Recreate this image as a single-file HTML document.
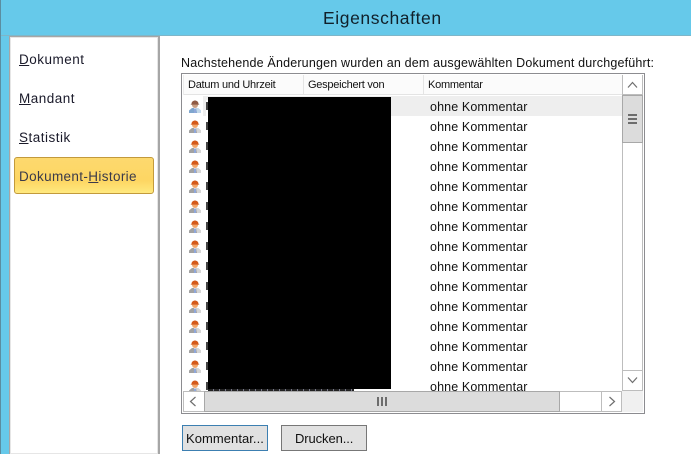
<!DOCTYPE html>
<html><head><meta charset="utf-8">
<style>
html,body{margin:0;padding:0}
body{width:691px;height:454px;position:relative;overflow:hidden;background:#fff;font-family:"Liberation Sans",sans-serif;color:#111}
div{position:absolute;box-sizing:border-box}
.t{white-space:nowrap;line-height:16px;height:16px}
.nav{font-size:13.5px;left:19px;letter-spacing:.5px;color:#1a1a2a}
.r{left:430px;font-size:12.5px;letter-spacing:.12px;color:#111}
.h{font-size:11px;top:77px;color:#111;letter-spacing:-.25px}
.ic{position:absolute;left:188px;width:14px;height:14px}
u{text-decoration:underline}
</style></head><body>
<svg width="0" height="0" style="position:absolute"><defs>
<g id="p"><path d="M1 14V11.5L4 9H10L13 11.5V14Z" fill="#a2a2a2"/><path d="M8 9H10L13 11.5V14H9Z" fill="#d6d6d6"/><path d="M6 9H8V14H6Z" fill="#fff"/><path d="M6.5 9.5H7.5V14H6.5Z" fill="#1f4fb5"/><circle cx="7" cy="6" r="3" fill="#f2a86c"/><path d="M3.5 4.7C4 0.5 10 0.5 10.5 4.7L11.5 5.6H2.5Z" fill="#d4591a"/></g>
<g id="p0"><path d="M1 14V11.5L4 9H10L13 11.5V14Z" fill="#7fa6ce"/><path d="M8 9H10L13 11.5V14H9Z" fill="#c3d8ea"/><path d="M6 9H8V14H6Z" fill="#fff"/><path d="M6.5 9.5H7.5V14H6.5Z" fill="#1f4fb5"/><circle cx="7" cy="6" r="3" fill="#c99f84"/><path d="M3.5 4.7C4 0.5 10 0.5 10.5 4.7L11.5 5.6H2.5Z" fill="#8f5a44"/></g>
</defs></svg>

<div style="left:0;top:0;width:691px;height:36px;background:#66c9ea;border-bottom:1px solid #7fb6c8"></div>
<div style="left:0;top:36px;width:9px;height:418px;background:#66c9ea"></div>
<div style="left:0;top:0;width:1px;height:454px;background:#5b8da0"></div>
<div class="t" style="left:323px;top:8px;height:20px;line-height:20px;font-size:17.5px;letter-spacing:.6px;color:#10202a">Eigenschaften</div>

<div style="left:9px;top:36px;width:150px;height:418px;background:#fff;border:1px solid #a6a6a6;border-bottom:0;box-shadow:inset 0 0 0 1px #e6e6e6"></div>
<div style="left:159px;top:36px;width:1px;height:418px;background:#a6a6a6"></div>

<div class="t nav" style="top:52px"><u>D</u>okument</div>
<div class="t nav" style="top:91px"><u>M</u>andant</div>
<div class="t nav" style="top:130px"><u>S</u>tatistik</div>
<div style="left:14px;top:157px;width:140px;height:37px;border:1px solid #c29a3c;border-radius:3px;background:linear-gradient(#fdd96e,#fdd663 65%,#ffe97f)"></div>
<div class="t nav" style="top:169px;letter-spacing:.36px;color:#3a3a4a">Dokument-<u>H</u>istorie</div>

<div class="t" style="left:181px;top:55px;font-size:12.5px;letter-spacing:.18px;color:#111">Nachstehende Änderungen wurden an dem ausgewählten Dokument durchgeführt:</div>

<div style="left:181px;top:73px;width:464px;height:341px;border:1px solid #8c8c90;background:#fff"></div>
<div style="left:183px;top:75px;width:439px;height:20px;background:#fbfbfb;border-bottom:1px solid #e4e4e4"></div>
<div style="left:303px;top:75px;width:1px;height:20px;background:#e4e4e4"></div>
<div style="left:423px;top:75px;width:1px;height:20px;background:#e4e4e4"></div>
<div style="left:183px;top:75px;width:1px;height:20px;background:#ececec"></div>
<div class="t h" style="left:188px">Datum und Uhrzeit</div>
<div class="t h" style="left:308px">Gespeichert von</div>
<div class="t h" style="left:428px">Kommentar</div>

<div style="left:203px;top:96px;width:419px;height:20px;background:#eeeeee"></div>

<svg class="ic" style="top:99px"><use href="#p0"/></svg>
<svg class="ic" style="top:119px"><use href="#p"/></svg>
<svg class="ic" style="top:139px"><use href="#p"/></svg>
<svg class="ic" style="top:159px"><use href="#p"/></svg>
<svg class="ic" style="top:179px"><use href="#p"/></svg>
<svg class="ic" style="top:199px"><use href="#p"/></svg>
<svg class="ic" style="top:219px"><use href="#p"/></svg>
<svg class="ic" style="top:239px"><use href="#p"/></svg>
<svg class="ic" style="top:259px"><use href="#p"/></svg>
<svg class="ic" style="top:279px"><use href="#p"/></svg>
<svg class="ic" style="top:299px"><use href="#p"/></svg>
<svg class="ic" style="top:319px"><use href="#p"/></svg>
<svg class="ic" style="top:339px"><use href="#p"/></svg>
<svg class="ic" style="top:359px"><use href="#p"/></svg>
<svg class="ic" style="top:379px;height:12px"><use href="#p"/></svg>

<div class="t r" style="top:99px">ohne Kommentar</div>
<div class="t r" style="top:119px">ohne Kommentar</div>
<div class="t r" style="top:139px">ohne Kommentar</div>
<div class="t r" style="top:159px">ohne Kommentar</div>
<div class="t r" style="top:179px">ohne Kommentar</div>
<div class="t r" style="top:199px">ohne Kommentar</div>
<div class="t r" style="top:219px">ohne Kommentar</div>
<div class="t r" style="top:239px">ohne Kommentar</div>
<div class="t r" style="top:259px">ohne Kommentar</div>
<div class="t r" style="top:279px">ohne Kommentar</div>
<div class="t r" style="top:299px">ohne Kommentar</div>
<div class="t r" style="top:319px">ohne Kommentar</div>
<div class="t r" style="top:339px">ohne Kommentar</div>
<div class="t r" style="top:359px">ohne Kommentar</div>
<div class="t r" style="top:379px;height:12px;overflow:hidden">ohne Kommentar</div>

<div style="left:206px;top:100px;width:2px;height:290px;background:repeating-linear-gradient(#fff 0,#fff 2px,#444 2px,#444 10px,#fff 10px,#fff 20px)"></div>
<div style="left:208px;top:97px;width:183px;height:292px;background:#000"></div>
<div style="left:208px;top:389px;width:146px;height:2px;background:repeating-linear-gradient(90deg,#222 0,#222 5px,#778 5px,#778 6px)"></div>

<!-- vertical scrollbar -->
<div style="left:622px;top:75px;width:21px;height:316px;background:#fff;border:1px solid #bdbdbd;border-width:0 1px 0 1px"></div>
<div style="left:622px;top:94px;width:21px;height:1px;background:#bdbdbd"></div>
<div style="left:622px;top:95px;width:21px;height:48px;background:#dcdcdc;border:1px solid #a8a8a8"></div>
<div style="left:628px;top:114px;width:9px;height:2px;background:#6d6d6d"></div>
<div style="left:628px;top:118px;width:9px;height:2px;background:#6d6d6d"></div>
<div style="left:628px;top:122px;width:9px;height:2px;background:#6d6d6d"></div>
<div style="left:622px;top:370px;width:21px;height:1px;background:#bdbdbd"></div>
<div style="left:622px;top:390px;width:21px;height:1px;background:#bdbdbd"></div>
<svg style="position:absolute;left:627px;top:81px" width="11" height="8"><path d="M1 6.5L5.5 1.5L10 6.5" fill="none" stroke="#6f6f6f" stroke-width="1.2"/></svg>
<svg style="position:absolute;left:627px;top:376px" width="11" height="8"><path d="M1 1.5L5.5 6.5L10 1.5" fill="none" stroke="#6f6f6f" stroke-width="1.2"/></svg>

<!-- horizontal scrollbar -->
<div style="left:183px;top:391px;width:439px;height:21px;background:#fff;border:1px solid #bdbdbd"></div>
<div style="left:204px;top:391px;width:356px;height:21px;background:#dcdcdc;border:1px solid #a8a8a8"></div>
<div style="left:601px;top:391px;width:1px;height:21px;background:#bdbdbd"></div>
<div style="left:622px;top:391px;width:21px;height:21px;background:#f0f0f0"></div>
<div style="left:377px;top:397px;width:2px;height:9px;background:#6d6d6d"></div>
<div style="left:381px;top:397px;width:2px;height:9px;background:#6d6d6d"></div>
<div style="left:385px;top:397px;width:2px;height:9px;background:#6d6d6d"></div>
<svg style="position:absolute;left:189px;top:396px" width="8" height="11"><path d="M6.5 1L1.5 5.5L6.5 10" fill="none" stroke="#6f6f6f" stroke-width="1.2"/></svg>
<svg style="position:absolute;left:608px;top:396px" width="8" height="11"><path d="M1.5 1L6.5 5.5L1.5 10" fill="none" stroke="#6f6f6f" stroke-width="1.2"/></svg>

<!-- buttons -->
<div style="left:182px;top:425px;width:86px;height:26px;background:#e1e1e1;border:1px solid #3c7fb1"></div>
<div class="t" style="left:186px;top:431px;font-size:13px;letter-spacing:.05px;color:#111">Kommentar...</div>
<div style="left:281px;top:425px;width:86px;height:26px;background:#e1e1e1;border:1px solid #777"></div>
<div class="t" style="left:295px;top:431px;font-size:13px;letter-spacing:-.1px;color:#111">Drucken...</div>
</body></html>
